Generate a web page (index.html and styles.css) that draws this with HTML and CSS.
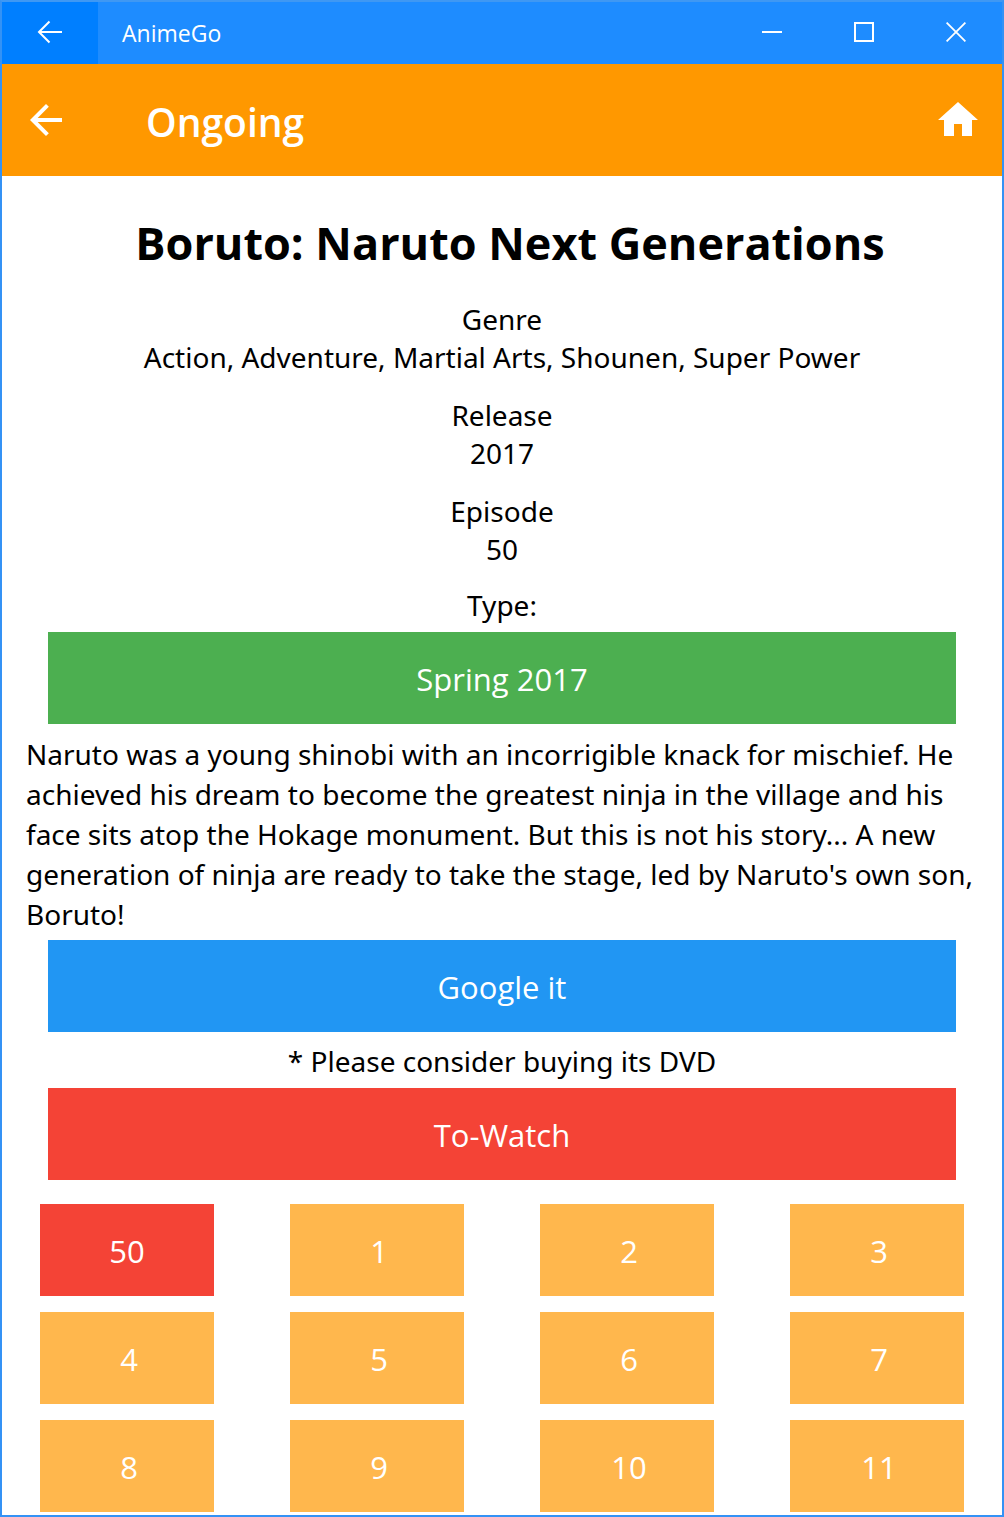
FILE: index.html
```html
<!DOCTYPE html>
<html lang="en">
<head>
<meta charset="utf-8">
<meta name="viewport" content="width=device-width, initial-scale=1">
<title>AnimeGo</title>
<link rel="stylesheet" href="styles.css">
</head>
<body>
<div class="window">
  <header class="titlebar">
    <button class="titlebar-back" type="button" aria-label="Back">
      <svg width="26" height="24" viewBox="0 0 26 24" fill="none" stroke="currentColor" stroke-width="2"><path d="M25 12H2M12.500 1.500L2 12l10.500 10.500"/></svg>
    </button>
    <span class="app-name">AnimeGo</span>
    <button class="caption-button" type="button" aria-label="Minimize">
      <svg width="20" height="20" viewBox="0 0 20 20" fill="none" stroke="currentColor" stroke-width="2"><path d="M0 10H20"/></svg>
    </button>
    <button class="caption-button" type="button" aria-label="Maximize">
      <svg width="20" height="20" viewBox="0 0 20 20" fill="none" stroke="currentColor" stroke-width="2"><path d="M1 1H19V19H1Z"/></svg>
    </button>
    <button class="caption-button" type="button" aria-label="Close">
      <svg width="20" height="20" viewBox="0 0 20 20" fill="none" stroke="currentColor" stroke-width="1.800"><path d="M.6.600L19.400 19.400M19.400.600L.6 19.400"/></svg>
    </button>
  </header>

  <nav class="toolbar">
    <button class="icon-button" type="button" aria-label="Go back">
      <svg width="32" height="32" viewBox="4 4 16 16" fill="currentColor"><path d="M20 11H7.830l5.590-5.590L12 4l-8 8 8 8 1.410-1.410L7.830 13H20v-2z"/></svg>
    </button>
    <h2 class="toolbar-title">Ongoing</h2>
    <button class="icon-button" type="button" aria-label="Home">
      <svg width="40" height="36" viewBox="2 3 20 18" fill="currentColor"><path d="M10 20v-6h4v6h5v-8h3L12 3 2 12h3v8z"/></svg>
    </button>
  </nav>

  <main class="content">
    <h1 class="title">Boruto: Naruto Next Generations</h1>
    <dl class="facts">
      <div><dt>Genre</dt><dd>Action, Adventure, Martial Arts, Shounen, Super Power</dd></div>
      <div><dt>Release</dt><dd>2017</dd></div>
      <div><dt>Episode</dt><dd>50</dd></div>
    </dl>
    <p class="line">Type:</p>
    <button class="action green" type="button">Spring 2017</button>
    <p class="description">Naruto was a young shinobi with an incorrigible knack for mischief. He achieved his dream to become the greatest ninja in the village and his face sits atop the Hokage monument. But this is not his story... A new generation of ninja are ready to take the stage, led by Naruto's own son, Boruto!</p>
    <button class="action blue" type="button">Google it</button>
    <p class="line">* Please consider buying its DVD</p>
    <button class="action red" type="button">To-Watch</button>
    <div class="episodes">
      <button class="episode red" type="button">50</button>
      <button class="episode" type="button">1</button>
      <button class="episode" type="button">2</button>
      <button class="episode" type="button">3</button>
      <button class="episode" type="button">4</button>
      <button class="episode" type="button">5</button>
      <button class="episode" type="button">6</button>
      <button class="episode" type="button">7</button>
      <button class="episode" type="button">8</button>
      <button class="episode" type="button">9</button>
      <button class="episode" type="button">10</button>
      <button class="episode" type="button">11</button>
    </div>
  </main>
</div>
</body>
</html>
```
FILE: styles.css
```css
* {
  box-sizing: border-box;
  margin: 0;
}

body {
  background: #fff;
  color: #000;
  font: 28px/38px "Noto Sans", "Open Sans", sans-serif;
}

button {
  border: 0;
  padding: 0;
  color: #fff;
  background: none;
  font: inherit;
}

svg {
  display: block;
}

.window {
  min-height: 100vh;
  border: 2px solid #3492f5;
  border-top-color: #3f98f3;
}

.titlebar,
.toolbar,
.title,
.action,
.episode {
  font-family: "Open Sans", "Noto Sans", sans-serif;
}

.titlebar {
  display: flex;
  height: 62px;
  color: #fff;
  background: #1e8cff;
}

.titlebar-back {
  display: grid;
  place-items: center;
  width: 96px;
  padding-bottom: 2px;
  background: #007fff;
}

.app-name {
  flex: 1;
  padding-left: 24px;
  font-size: 23px;
  line-height: 62px;
}

.caption-button {
  display: grid;
  place-items: center;
  width: 92px;
  height: 60px;
}

.toolbar {
  display: flex;
  align-items: center;
  height: 112px;
  padding: 0 24px 0 28px;
  color: #fff;
  background: #ff9800;
}

.toolbar-title {
  flex: 1;
  padding: 4px 0 0 84px;
  font-size: 39px;
  font-weight: 600;
  line-height: 48px;
}

.content {
  padding: 35px 0 3px;
  text-align: center;
}

.title {
  padding-left: 16px;
  font-size: 45px;
  line-height: 64px;
}

.facts {
  display: grid;
  gap: 20px;
  margin: 25px 0 18px;
}

.facts dd {
  margin: 0;
}

.action {
  display: block;
  width: calc(100% - 92px);
  height: 92px;
  margin: 8px 46px 10px;
  padding-top: 2px;
  font-size: 31px;
}

.green {
  background: #4caf50;
}

.blue {
  background: #2196f3;
}

.description {
  padding: 0 16px 0 24px;
  margin-bottom: -2px;
  line-height: 40px;
  text-align: left;
}

.episodes {
  display: grid;
  grid-template-columns: repeat(4, 1fr);
  gap: 16px 76px;
  padding: 14px 38px 0;
}

.episode {
  height: 92px;
  padding: 2px 0 0 4px;
  background: #ffb74d;
  font-size: 31px;
}

.episode.red {
  padding-left: 0;
}

.action.red,
.episode.red {
  background: #f44336;
}
```
